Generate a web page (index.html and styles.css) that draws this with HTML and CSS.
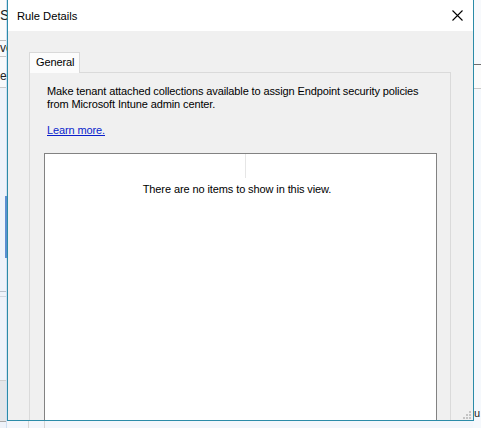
FILE: index.html
```html
<!DOCTYPE html>
<html>
<head>
<meta charset="utf-8">
<title>Rule Details</title>
<link rel="stylesheet" href="styles.css">
</head>
<body>
<div class="desk">
  <div class="bg-left">
    <div class="bl-title">S</div>
    <div class="bl-row bl-row1">ve</div>
    <div class="bl-row bl-row2">er</div>
    <div class="bl-gap"></div>
    <div class="bl-scroll"></div>
    <div class="bl-gap2"></div>
    <div class="bl-line"></div>
    <div class="bl-fill"></div>
    <div class="bl-btn"></div>
  </div>
  <div class="bg-mid">
    <div class="bm-cols"><span class="bm-c1"></span><span class="bm-c2"></span></div>
  </div>
  <div class="bg-right">
    <div class="br-top"></div>
    <div class="br-head"></div>
    <div class="br-fill"></div>
    <div class="br-text">u</div>
  </div>
</div>

<div class="dialog">
  <div class="titlebar">
    <span class="title">Rule Details</span>
    <svg class="close" width="11" height="11" viewBox="0 0 11 11"><path d="M0.5 0.5 L10.5 10.5 M10.5 0.5 L0.5 10.5" stroke="#000" stroke-width="1.1" fill="none"/></svg>
  </div>
  <div class="body">
    <div class="tabs"><div class="tab">General</div></div>
    <div class="panel">
      <p class="desc">Make tenant attached collections available to assign Endpoint security policies<br>from Microsoft Intune admin center.</p>
      <a class="link" href="#">Learn more.</a>
      <div class="list">
        <div class="list-head"><div class="col1"></div></div>
        <div class="empty">There are no items to show in this view.</div>
      </div>
    </div>
    <svg class="grip" width="8" height="8" viewBox="0 0 8 8">
      <rect x="6" y="0" width="2" height="2" fill="#c4c4c4"/>
      <rect x="3" y="3" width="2" height="2" fill="#c4c4c4"/>
      <rect x="6" y="3" width="2" height="2" fill="#c4c4c4"/>
      <rect x="0" y="6" width="2" height="2" fill="#c4c4c4"/>
      <rect x="3" y="6" width="2" height="2" fill="#c4c4c4"/>
      <rect x="6" y="6" width="2" height="2" fill="#c4c4c4"/>
    </svg>
  </div>
</div>
</body>
</html>
```

FILE: styles.css
```css
html, body {
  margin: 0;
  padding: 0;
  width: 481px;
  height: 428px;
  overflow: hidden;
  font-family: "Liberation Sans", Arial, sans-serif;
}

.desk {
  width: 481px;
  height: 428px;
  display: grid;
  grid-template-columns: 7px 1fr 8px;
  background: #f3f6fb;
}

/* background window, left strip (partly hidden behind the dialog) */
.bg-left {
  display: flex;
  flex-direction: column;
  border-right: 1px solid #cfe0f2;
  background: #eef3fa;
}
.bl-title {
  height: 41px;
  box-sizing: border-box;
  background: #fbfbfb;
  font-size: 14px;
  line-height: 30px;
  color: #222;
  border-bottom: 1px solid #bfbfbf;
  white-space: nowrap;
}
.bl-row {
  font-size: 12px;
  color: #222;
  white-space: nowrap;
  background: #f8f9fb;
}
.bl-row1 {
  height: 15px;
  line-height: 14px;
  border-bottom: 1px solid #c6c6c6;
}
.bl-row2 {
  height: 30px;
  line-height: 38px;
  border-bottom: 1px solid #c9c9c9;
}
.bl-gap {
  height: 108px;
}
.bl-scroll {
  height: 62px;
  margin-left: 5px;
  width: 2px;
  background: #5b8fd0;
}
.bl-gap2 {
  height: 33px;
}
.bl-line {
  height: 4px;
  border-top: 1px solid #b9c2cc;
  border-bottom: 1px solid #d2d8df;
}
.bl-fill {
  flex: 1;
}
.bl-btn {
  height: 40px;
  background: #e4e6e9;
  border-top: 1px solid #d0d0d0;
  border-bottom: 1px solid #a9a9a9;
  margin-bottom: 6px;
}

.bg-mid {
  display: flex;
  flex-direction: column;
  justify-content: flex-end;
}
.bm-cols {
  height: 8px;
  display: flex;
}
.bm-c1 {
  margin-left: 21px;
  width: 15px;
  border-left: 1px solid #d6d6d6;
}
.bm-c2 {
  border-left: 1px solid #d6d6d6;
}

/* background window, right strip */
.bg-right {
  display: flex;
  flex-direction: column;
  background: #f5f8fc;
}
.br-top {
  height: 64px;
  background: #f7f9fc;
  border-bottom: 1px solid #6e6e6e;
}
.br-head {
  height: 23px;
  background: #fbfbfb;
  border-bottom: 1px solid #c9c9c9;
}
.br-fill {
  flex: 1;
}
.br-text {
  font-size: 11px;
  line-height: 12px;
  color: #222;
  margin-left: 1px;
  margin-bottom: 9px;
}

/* dialog window */
.dialog {
  position: absolute;
  left: 7px;
  top: -1px;
  width: 467px;
  height: 422px;
  box-sizing: border-box;
  border: 1px solid #2b8ba8;
  background: #f0f0f0;
  display: flex;
  flex-direction: column;
  overflow: hidden;
}

.titlebar {
  height: 31px;
  flex: none;
  background: #ffffff;
  display: flex;
  align-items: center;
  justify-content: space-between;
  padding: 0 10px 0 9px;
}
.title {
  font-family: "Liberation Sans", Arial, sans-serif;
  font-size: 11.2px;
  color: #000;
  padding-top: 1px;
}
.close {
  display: block;
}

.body {
  flex: 1;
  position: relative;
  padding: 21px 22px 0 21px;
  display: flex;
  flex-direction: column;
  overflow: hidden;
  font-size: 11px;
  letter-spacing: -0.12px;
  color: #000;
}

.tabs {
  display: flex;
  position: relative;
  z-index: 1;
}
.tab {
  width: 51px;
  height: 21px;
  box-sizing: border-box;
  background: #fcfcfc;
  border: 1px solid #d9d9d9;
  border-bottom: none;
  padding-left: 6px;
  line-height: 19px;
  font-size: 11px;
  margin-bottom: -1px;
}

.panel {
  flex: 1;
  border: 1px solid #dadada;
  background: #f0f0f0;
  padding: 12px 13px 0 17px;
  display: flex;
  flex-direction: column;
  align-items: flex-start;
}
.desc {
  margin: 0;
  line-height: 13px;
}
.link {
  margin-top: 13px;
  line-height: 13px;
  color: #0a1fcc;
  text-decoration: underline;
}

.list {
  align-self: stretch;
  margin: 16px 0 0 -3px;
  height: 320px;
  flex: none;
  background: #ffffff;
  border: 1px solid #828282;
}
.list-head {
  height: 24px;
  display: flex;
}
.col1 {
  width: 200px;
  border-right: 1px solid #e6e6e6;
}
.empty {
  margin-top: 5px;
  padding-right: 7px;
  text-align: center;
  line-height: 13px;
  letter-spacing: -0.1px;
}

.grip {
  position: absolute;
  right: 2px;
  bottom: 1px;
}
```
